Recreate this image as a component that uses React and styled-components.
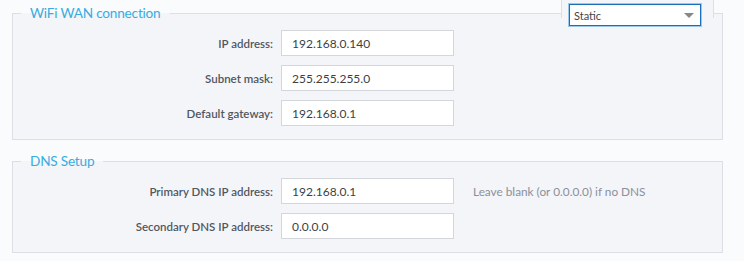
import React from 'react';
import styled, { createGlobalStyle } from 'styled-components';

const GlobalStyle = createGlobalStyle`
  body {
    margin: 0;
    background: #fafbfd;
    font-family: Lato, "Open Sans", sans-serif;
  }
`;

const Page = styled.div`
  padding: 4px 21px 0 12px;
  display: flex;
  flex-direction: column;
  gap: 12px;
`;

const Group = styled.div`
  position: relative;
`;

const Fieldset = styled.fieldset`
  margin: 0;
  padding: 7px 0 13px;
  border: 1px solid #dcdfe5;
  background: #f4f5f9;
  min-width: 0;
`;

const Legend = styled.legend`
  margin-left: 8px;
  padding: 0 9px;
  font-size: 13.6px;
  line-height: 19px;
  letter-spacing: -0.2px;
  color: #38ace0;
`;

const Tab = styled.div`
  position: absolute;
  left: 549px;
  top: -5px;
  width: 153px;
  height: 19px;
  box-sizing: border-box;
  background: #f4f5f9;
  border: 1px solid #dcdfe5;
  border-bottom: none;
  padding: 4px 0 0 7px;
`;

const Select = styled.div`
  width: 132px;
  height: 22px;
  box-sizing: border-box;
  display: flex;
  align-items: center;
  justify-content: space-between;
  padding: 0 6px 0 4px;
  background: #fff;
  border: 1px solid #1a6fb8;
  box-shadow: 0 0 0 1px #9cc8ea;
  font-size: 11px;
  color: #444;
`;

const Arrow = styled.span`
  width: 0;
  height: 0;
  border-left: 5px solid transparent;
  border-right: 5px solid transparent;
  border-top: 5px solid #888;
`;

const Rows = styled.div`
  display: grid;
  grid-template-columns: 260px 173px auto;
  column-gap: 8px;
  row-gap: 9px;
  align-items: center;
`;

const Label = styled.label`
  text-align: right;
  font-size: 11.5px;
  font-weight: 600;
  color: #505761;
`;

const Input = styled.div`
  height: 26px;
  box-sizing: border-box;
  display: flex;
  align-items: center;
  padding: 0 10px;
  background: #fff;
  border: 1px solid #d3d6db;
  font-size: 12px;
  color: #3a3f46;
`;

const Help = styled.span`
  margin-left: 11px;
  font-size: 11.8px;
  color: #8b9099;
`;

const Field = ({ label, value, help }) => (
  <>
    <Label>{label}</Label>
    <Input>{value}</Input>
    {help ? <Help>{help}</Help> : <span />}
  </>
);

export default function App() {
  return (
    <Page>
      <GlobalStyle />
      <Group>
        <Fieldset>
          <Legend>WiFi WAN connection</Legend>
          <Rows>
            <Field label="IP address:" value="192.168.0.140" />
            <Field label="Subnet mask:" value="255.255.255.0" />
            <Field label="Default gateway:" value="192.168.0.1" />
          </Rows>
        </Fieldset>
        <Tab>
          <Select>
            Static
            <Arrow />
          </Select>
        </Tab>
      </Group>
      <Group>
        <Fieldset>
          <Legend>DNS Setup</Legend>
          <Rows>
            <Field
              label="Primary DNS IP address:"
              value="192.168.0.1"
              help="Leave blank (or 0.0.0.0) if no DNS"
            />
            <Field label="Secondary DNS IP address:" value="0.0.0.0" />
          </Rows>
        </Fieldset>
      </Group>
    </Page>
  );
}
